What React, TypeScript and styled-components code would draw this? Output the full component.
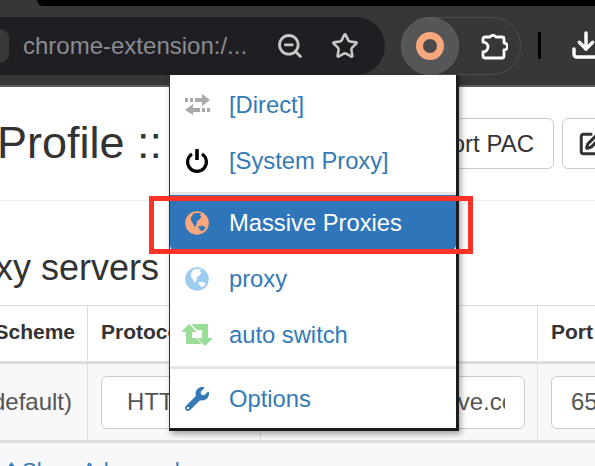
import React from "react";
import styled, { createGlobalStyle } from "styled-components";
import { Star, ZoomOut, Download, SquarePen } from "lucide-react";
import { FaWrench } from "react-icons/fa";

const Global = createGlobalStyle`
  html, body { margin: 0; padding: 0; background: #fff; }
  body { font-family: "Liberation Sans", Arial, sans-serif; color: #333; }
  * { box-sizing: border-box; }
`;

const Screen = styled.div`
  position: relative;
  width: 595px;
  height: 466px;
  overflow: hidden;
  display: flex;
  flex-direction: column;
`;

const BrowserBar = styled.header`
  height: 87px;
  flex: none;
  background: #383638;
  border-bottom: 2px solid #5c5b5d;
  display: flex;
  flex-direction: column;
`;

const TabStrip = styled.div`
  height: 6px;
  margin-left: 37px;
  background: #000;
  border-bottom-left-radius: 8px;
  flex: none;
`;

const ToolRow = styled.div`
  display: flex;
  align-items: flex-start;
  padding-top: 11px;
`;

const Omnibox = styled.div`
  width: 385px;
  height: 58px;
  background: #1f1f23;
  border-radius: 0 29px 29px 0;
  display: flex;
  align-items: center;
  flex: none;
`;

const SiteChip = styled.div`
  width: 9px;
  height: 34px;
  background: #38373a;
  border-radius: 0 17px 17px 0;
  flex: none;
`;

const Url = styled.span`
  margin-left: 14px;
  width: 250px;
  font-size: 24px;
  color: #8a8c91;
  white-space: nowrap;
  flex: none;
`;

const OmniIcon = styled.span<{ $ml: number }>`
  margin-left: ${(p) => p.$ml}px;
  display: flex;
  color: #c8c8cb;
  flex: none;
`;

const ExtPill = styled.div`
  margin-left: 16px;
  width: 120px;
  height: 58px;
  border: 1px solid #4d4c4f;
  border-radius: 29px;
  display: flex;
  align-items: center;
  flex: none;
`;

const ActiveExt = styled.div`
  width: 58px;
  height: 58px;
  margin-left: -1px;
  border-radius: 50%;
  background: #565557;
  border: 1px solid #5f5e60;
  display: flex;
  align-items: center;
  justify-content: center;
  flex: none;
`;

const Ring = styled.div`
  width: 28px;
  height: 28px;
  border-radius: 50%;
  border: 7px solid #f7a77b;
  background: #4a494b;
`;

const PuzzleSlot = styled.span`
  margin-left: 21px;
  display: flex;
`;

const Separator = styled.div`
  width: 3px;
  height: 27px;
  margin: 15px 0 0 17px;
  background: #000;
  flex: none;
`;

const DownloadSlot = styled.span`
  margin: 12px 0 0 29px;
  display: flex;
  color: #fff;
  flex: none;
`;

const Page = styled.main`
  flex: 1;
  min-height: 0;
  background: #fff;
  display: flex;
  flex-direction: column;
`;

const HeaderRow = styled.div`
  height: 114px;
  flex: none;
  border-bottom: 1px solid #eee;
  display: flex;
  align-items: flex-start;
`;

const Title = styled.h1`
  margin: 31px 0 0 -3px;
  width: 440px;
  font-size: 45px;
  line-height: 50px;
  font-weight: 400;
  white-space: nowrap;
  flex: none;
`;

const HeadButton = styled.div<{ $w: number; $ml: number }>`
  margin: 31px 0 0 ${(p) => p.$ml}px;
  width: ${(p) => p.$w}px;
  height: 51px;
  background: #fff;
  border: 1px solid #ccc;
  border-radius: 6px;
  font-size: 24px;
  display: flex;
  align-items: center;
  justify-content: flex-end;
  padding-right: 19px;
  white-space: nowrap;
  flex: none;
`;

const EditButton = styled(HeadButton)`
  justify-content: flex-start;
  padding: 0 0 0 15px;
`;

const SectionTitle = styled.h3`
  margin: 47px 0 0 -61px;
  font-size: 36px;
  line-height: 40px;
  font-weight: 400;
  white-space: nowrap;
  flex: none;
`;

const Table = styled.div`
  margin-top: 17px;
  width: 738px;
  display: grid;
  grid-template-columns: 88px 173px 277px 200px;
  background: #fff;
  flex: none;
`;

const HeadCell = styled.div<{ $end?: boolean }>`
  height: 59px;
  border-top: 1px solid #ddd;
  border-bottom: 3px solid #ddd;
  border-right: 1px solid #ddd;
  font-size: 21px;
  font-weight: 700;
  display: flex;
  align-items: center;
  white-space: nowrap;
  overflow: hidden;
  justify-content: ${(p) => (p.$end ? "flex-end" : "flex-start")};
  padding: ${(p) => (p.$end ? "0 12px 3px 0" : "0 0 3px 13px")};
`;

const BodyCell = styled.div<{ $end?: boolean }>`
  height: 79px;
  background: #f8f7fa;
  border-bottom: 3px solid #ddd;
  border-right: 1px solid #ddd;
  font-size: 24px;
  display: flex;
  align-items: center;
  white-space: nowrap;
  overflow: hidden;
  color: #555;
  justify-content: ${(p) => (p.$end ? "flex-end" : "flex-start")};
  padding: ${(p) => (p.$end ? "0 15px 0 0" : "0 12px 0 13px")};
`;

const Field = styled.div<{ $indent: number }>`
  width: 100%;
  min-width: 0;
  height: 53px;
  background: #fff;
  border: 1px solid #ccc;
  border-radius: 6px;
  display: flex;
  align-items: center;
  flex: none;
  padding: 0 19px 0 ${(p) => p.$indent}px;
`;

const FieldText = styled.span<{ $shift?: number }>`
  display: block;
  overflow: hidden;
  text-indent: ${(p) => p.$shift ?? 0}px;
`;

const Footer = styled.div`
  flex: 1;
  background: #f8f7fa;
  padding: 15px 0 0 8px;
  font-size: 22px;
  line-height: 26px;
  color: #337ab7;
  white-space: nowrap;
  display: flex;
  align-items: flex-start;
  gap: 7px;
`;

const SortArrows = styled.svg`
  margin-top: 4px;
  flex: none;
`;

const Menu = styled.nav`
  position: absolute;
  left: 169px;
  top: 75px;
  width: 290px;
  height: 356px;
  background: #fff;
  border-left: 1px solid #333;
  border-right: 3px solid #1c1c1e;
  border-bottom: 3px solid #1c1c1e;
  box-shadow: 2px 3px 6px rgba(0, 0, 0, 0.35);
  padding-top: 2px;
  display: flex;
  flex-direction: column;
`;

const MenuItem = styled.a<{ $active?: boolean }>`
  height: 56px;
  flex: none;
  display: flex;
  align-items: center;
  font-size: 23.75px;
  color: ${(p) => (p.$active ? "#fff" : "#337ab7")};
  background: ${(p) => (p.$active ? "#2f75b9" : "transparent")};
  border-radius: ${(p) => (p.$active ? "0 0 6px 6px" : "0")};
  white-space: nowrap;
`;

const IconBox = styled.span`
  width: 54px;
  margin-right: 5px;
  flex: none;
  display: flex;
  align-items: center;
  justify-content: center;
`;

const WrenchBox = styled(IconBox)`
  color: #337ab7;
`;

const MenuDivider = styled.div<{ $mt: number; $mb: number }>`
  height: 3px;
  flex: none;
  background: #e5e5e5;
  margin: ${(p) => p.$mt}px 0 ${(p) => p.$mb}px;
`;

const RedFrame = styled.div`
  position: absolute;
  left: 149px;
  top: 196px;
  width: 324px;
  height: 58px;
  border: 5px solid #ff3227;
  pointer-events: none;
`;

const TransferIcon = () => (
  <svg width="25" height="22" viewBox="0 0 25 22" fill="#aaa">
    <path d="M0 5h3v4H0zM5 5h3v4H5zM10 5h7V1l8 6-8 6V9h-7z" transform="translate(0 -1)" />
    <path d="M25 15h-3v4h3zM20 15h-3v4h3zM15 15H8v-4l-8 6 8 5v-3h7z" transform="translate(0 -1)" />
  </svg>
);

const PowerIcon = () => (
  <svg width="24" height="24" viewBox="0 0 24 24" fill="none" stroke="#000" strokeWidth="3.2">
    <path d="M7 5a9.4 9.4 0 1 0 10 0" />
    <path d="M12 0v11" strokeWidth="3.6" />
  </svg>
);

const PuzzleIcon = () => (
  <svg width="28" height="28" viewBox="0 0 28 28" fill="none" stroke="#fff" strokeWidth="2.8" strokeLinejoin="round">
    <path d="M5 5h5a3.5 3.5 0 0 1 6 0h6a2 2 0 0 1 2 2v4a3.5 3.5 0 0 1 0 7v6a2 2 0 0 1-2 2H5a2 2 0 0 1-2-2v-4a5 5 0 0 0 0-10V7a2 2 0 0 1 2-2z" />
  </svg>
);

const GlobeIcon = ({ disc, land }: { disc: string; land: string }) => (
  <svg width="24" height="24" viewBox="0 0 24 24">
    <circle cx="12" cy="12" r="11.8" fill={disc} />
    <path
      d="M8.5 2.6C11 1.6 15 1.6 16.5 3l-2 1.6 2 1.2-2.4 3-2 1-.4 3-1.8 3.4L8 12.6 6.2 10 6 6.4z"
      fill={land}
    />
    <path d="M13 15.2l5.2-.4 2.6 2-3.4 3.4-2.4-1.2z" fill={land} />
  </svg>
);

const RetweetIcon = () => (
  <svg width="32" height="22" viewBox="0 0 32 22" fill="#99dd99">
    <path d="M8 0l8 8h-5v6h4l6 6H5V8H0z" />
    <path d="M24 22l8-8h-5V0H10l6 6h5v8h-5z" />
  </svg>
);

export default function App() {
  return (
    <Screen>
      <Global />
      <BrowserBar>
        <TabStrip />
        <ToolRow>
          <Omnibox>
            <SiteChip />
            <Url>chrome-extension:/...</Url>
            <OmniIcon $ml={3}>
              <ZoomOut size={28} strokeWidth={2.4} />
            </OmniIcon>
            <OmniIcon $ml={27}>
              <Star size={28} strokeWidth={2.2} />
            </OmniIcon>
          </Omnibox>
          <ExtPill>
            <ActiveExt>
              <Ring />
            </ActiveExt>
            <PuzzleSlot>
              <PuzzleIcon />
            </PuzzleSlot>
          </ExtPill>
          <Separator />
          <DownloadSlot>
            <Download size={32} strokeWidth={2.6} />
          </DownloadSlot>
        </ToolRow>
      </BrowserBar>
      <Page>
        <HeaderRow>
          <Title>Profile ::</Title>
          <HeadButton $w={117} $ml={0}>Export PAC</HeadButton>
          <EditButton $w={60} $ml={8}>
            <SquarePen size={26} strokeWidth={2.8} />
          </EditButton>
        </HeaderRow>
        <SectionTitle>Proxy servers</SectionTitle>
        <Table>
          <HeadCell $end>Scheme</HeadCell>
          <HeadCell>Protocol</HeadCell>
          <HeadCell>Server</HeadCell>
          <HeadCell>Port</HeadCell>
          <BodyCell $end>(default)</BodyCell>
          <BodyCell>
            <Field $indent={25}>
              <FieldText>HTTP</FieldText>
            </Field>
          </BodyCell>
          <BodyCell>
            <Field $indent={0}>
              <FieldText $shift={-8}>network.joinmassive.com</FieldText>
            </Field>
          </BodyCell>
          <BodyCell>
            <Field $indent={19}>
              <FieldText>65534</FieldText>
            </Field>
          </BodyCell>
        </Table>
        <Footer>
          <SortArrows width="7" height="20" viewBox="0 0 7 20" fill="#337ab7">
            <path d="M3.5 0L7 5H4.5v10H7l-3.5 5L0 15h2.5V5H0z" />
          </SortArrows>
          <span>Show Advanced</span>
        </Footer>
      </Page>
      <Menu>
        <MenuItem>
          <IconBox><TransferIcon /></IconBox>
          [Direct]
        </MenuItem>
        <MenuItem>
          <IconBox><PowerIcon /></IconBox>
          [System Proxy]
        </MenuItem>
        <MenuDivider $mt={3} $mb={0} />
        <MenuItem $active>
          <IconBox><GlobeIcon disc="#f9a77c" land="#2f75b9" /></IconBox>
          Massive Proxies
        </MenuItem>
        <MenuItem>
          <IconBox><GlobeIcon disc="#9cccf0" land="#fff" /></IconBox>
          proxy
        </MenuItem>
        <MenuItem>
          <IconBox><RetweetIcon /></IconBox>
          auto switch
        </MenuItem>
        <MenuDivider $mt={3} $mb={2} />
        <MenuItem>
          <WrenchBox><FaWrench size={24} /></WrenchBox>
          Options
        </MenuItem>
      </Menu>
      <RedFrame />
    </Screen>
  );
}
